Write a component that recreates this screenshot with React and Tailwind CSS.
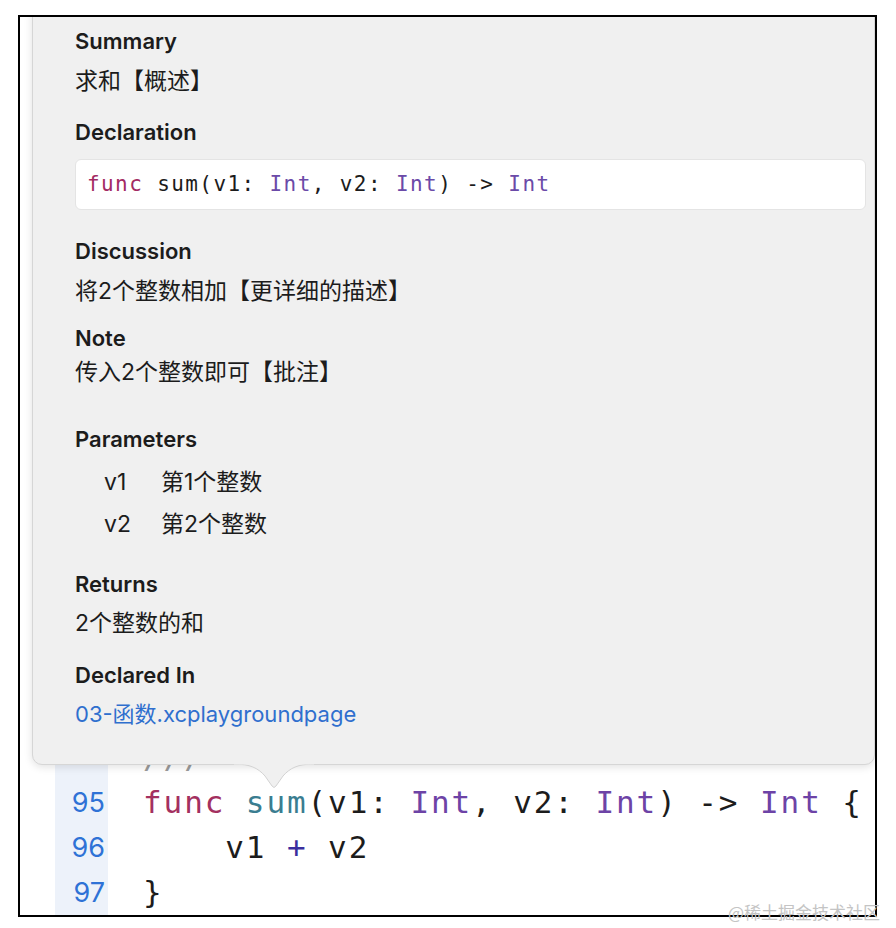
import React from 'react';

const lines = [
  { n: '', parts: [{ t: '///', c: 'text-[#9a9a9a]' }] },
  {
    n: '95',
    parts: [
      { t: 'func', c: 'text-[#a3305f]' },
      { t: ' ' },
      { t: 'sum', c: 'text-[#3a7d90]' },
      { t: '(v1: ' },
      { t: 'Int', c: 'text-[#6d43a6]' },
      { t: ', v2: ' },
      { t: 'Int', c: 'text-[#6d43a6]' },
      { t: ') -> ' },
      { t: 'Int', c: 'text-[#6d43a6]' },
      { t: ' {' },
    ],
  },
  {
    n: '96',
    parts: [
      { t: '    v1 ' },
      { t: '+', c: 'text-[#3b2e9e]' },
      { t: ' v2' },
    ],
  },
  { n: '97', parts: [{ t: '}' }] },
];

const Heading = ({ children, className = '' }) => (
  <div className={`h-[28px] leading-[28px] text-[22px] font-semibold text-[#1c1c1c] ${className}`}>
    {children}
  </div>
);

// CJK copy in the reference runs a touch wider than the headings
const Body = ({ children, className = '' }) => (
  <div className={`h-[28px] leading-[28px] text-[23px] text-[#1c1c1c] ${className}`}>{children}</div>
);

const Popover = () => (
  <div className="absolute left-[12px] top-[-12px] right-0 h-[760px] rounded-[10px] bg-[#f0f0f0] border border-[#d6d6d6] shadow-[0_2px_8px_rgba(0,0,0,0.12)]">
    <div className="pt-[21px] pl-[42px] pr-[8px]">
      <Heading>Summary</Heading>
      <Body className="mt-[12px]">求和【概述】</Body>

      <Heading className="mt-[23px]">Declaration</Heading>
      <div className="mt-[13px] h-[51px] flex items-center pl-[11px] bg-white rounded-[6px] border border-[#e4e4e4] font-['DejaVu_Sans_Mono',monospace] text-[21px] tracking-[1.4px] text-[#1c1c1c] whitespace-pre">
        <span className="text-[#a32b63]">func</span>
        <span> sum(v1: </span>
        <span className="text-[#6b4aa8]">Int</span>
        <span>, v2: </span>
        <span className="text-[#6b4aa8]">Int</span>
        <span>) -&gt; </span>
        <span className="text-[#6b4aa8]">Int</span>
      </div>

      <Heading className="mt-[27px]">Discussion</Heading>
      <Body className="mt-[12px]">将2个整数相加【更详细的描述】</Body>

      <Heading className="mt-[19px]">Note</Heading>
      <Body className="mt-[6px]">传入2个整数即可【批注】</Body>

      <Heading className="mt-[39px]">Parameters</Heading>
      <div className="mt-[15px] flex pl-[29px]">
        <Body className="w-[57px] text-[22px]">v1</Body>
        <Body>第1个整数</Body>
      </div>
      <div className="mt-[14px] flex pl-[29px]">
        <Body className="w-[57px] text-[22px]">v2</Body>
        <Body>第2个整数</Body>
      </div>

      <Heading className="mt-[32px]">Returns</Heading>
      <Body className="mt-[11px]">2个整数的和</Body>

      <Heading className="mt-[24px]">Declared In</Heading>
      <div className="mt-[11px] h-[28px] leading-[28px] text-[22px] text-[#2f6fce]">03-函数.xcplaygroundpage</div>
    </div>

    {/* arrow */}
    <svg
      className="absolute left-[201px] bottom-[-26px]"
      width="80"
      height="27"
      viewBox="0 0 80 27"
    >
      <path
        d="M0 1 C16 1 24 5 31 13 L38 23 Q40 26 42 23 L49 13 C56 5 64 1 80 1 Z"
        fill="#f0f0f0"
      />
      <path
        d="M0 1 C16 1 24 5 31 13 L38 23 Q40 26 42 23 L49 13 C56 5 64 1 80 1"
        fill="none"
        stroke="#d3d3d3"
        strokeWidth="1"
      />
      <rect x="0" y="0" width="80" height="1.5" fill="#f0f0f0" />
    </svg>
  </div>
);

export default function App() {
  return (
    <div className="relative w-[896px] h-[928px] bg-white pt-[15px] pl-[18px] font-['Inter','Noto_Sans_CJK_SC',sans-serif]">
      <div className="relative w-[859px] h-[902px] border-2 border-black overflow-hidden bg-white">
        {/* editor */}
        <div className="flex h-full">
          <div className="w-[35px]" />
          <div className="w-[53px] bg-[#edf2fa] flex flex-col justify-end items-end pr-[3px] text-[#2f72d6] text-[27px]">
            {lines.map((l, i) => (
              <div key={i} className="h-[45px] leading-[45px]">
                {l.n}
              </div>
            ))}
          </div>
          <div className="flex-1 flex flex-col justify-end pl-[35px] font-['DejaVu_Sans_Mono',monospace] text-[31px] tracking-[1.9px] text-[#1c1c1c] whitespace-pre">
            {lines.map((l, i) => (
              <div key={i} className="h-[45px] leading-[45px]">
                {l.parts.map((p, j) => (
                  <span key={j} className={p.c}>
                    {p.t}
                  </span>
                ))}
              </div>
            ))}
          </div>
        </div>

        <Popover />
      </div>

      <div className="absolute left-[728px] top-[899px] text-[17px] text-[#c4c4c4] font-['Noto_Sans_CJK_SC',sans-serif]">
        @稀土掘金技术社区
      </div>
    </div>
  );
}
